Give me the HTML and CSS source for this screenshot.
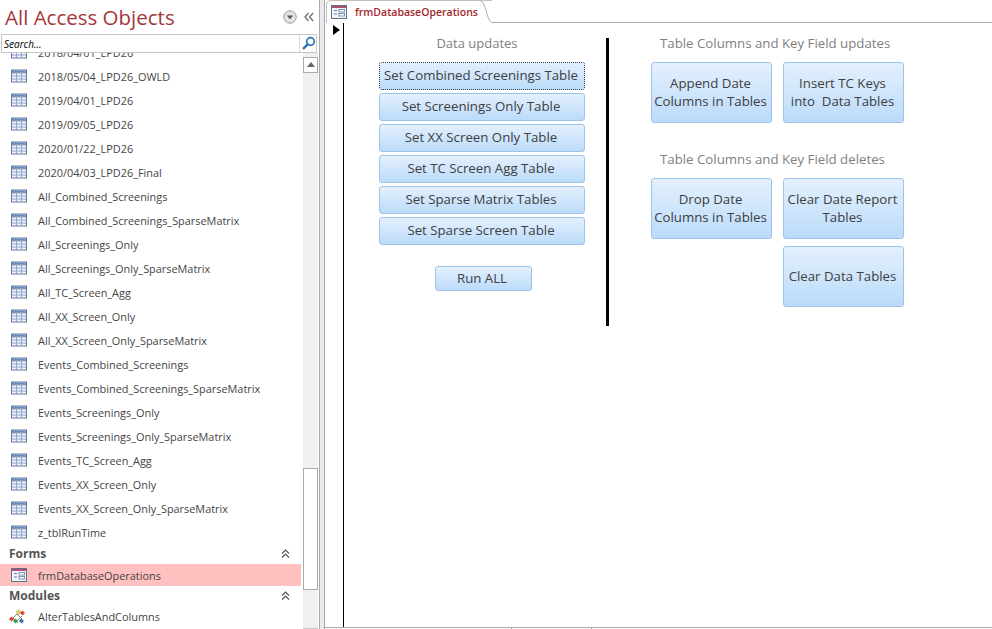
FILE: index.html

```html
<!DOCTYPE html>
<html lang="en">
<head>
    <meta charset="UTF-8">
    <title>frmDatabaseOperations</title>
    <link rel="stylesheet" href="styles.css">
</head>
<body>
    <svg class="defs" width="0" height="0">
        <symbol id="i-table" viewBox="0 0 16 13">
            <rect x="0.5" y="0.5" width="15" height="12" fill="#eef3fa" stroke="#5f7aa6"/>
            <rect x="1" y="1" width="14" height="2.5" fill="#6f8cba"/>
            <path d="M1 3.5h14M1 6.5h14M1 9.5h14M5.5 3v9M10.5 3v9" stroke="#8ea4c8" fill="none"/>
        </symbol>
        <symbol id="i-form" viewBox="0 0 16 14">
            <rect x="0.5" y="0.5" width="15" height="13" fill="#f2f5fa" stroke="#5f6f8c"/>
            <rect x="1" y="1" width="14" height="2" fill="#b0506f"/>
            <path d="M3 5.5h3M3 9h3" stroke="#5f7aa6" fill="none"/>
            <rect x="8" y="4.5" width="5.5" height="2.5" fill="#fff" stroke="#5f7aa6" stroke-width="0.8"/>
            <rect x="8" y="8.5" width="5.5" height="2.5" fill="#fff" stroke="#5f7aa6" stroke-width="0.8"/>
        </symbol>
    </svg>

    <div class="app">
        <aside class="nav">
            <div class="nav-head">
                <span class="nav-title">All Access Objects</span>
                <svg class="nav-menu" width="14" height="14" viewBox="0 0 14 14">
                    <circle cx="7" cy="7" r="6.2" fill="#e4e4e6" stroke="#9a9aa0"/>
                    <path d="M3.8 5.5h6.4L7 9.2z" fill="#555"/>
                </svg>
                <svg class="nav-collapse" width="10" height="10" viewBox="0 0 10 10">
                    <path d="M4.5 1L1 5l3.5 4M9 1L5.5 5 9 9" fill="none" stroke="#666" stroke-width="1.2"/>
                </svg>
            </div>
            <div class="search">
                <span class="search-text">Search...</span>
                <span class="search-btn">
                    <svg width="15" height="15" viewBox="0 0 15 15">
                        <circle cx="9.5" cy="5.5" r="3.8" fill="#fff" stroke="#2f74b5" stroke-width="1.7"/>
                        <path d="M6.8 8.2L2 13" stroke="#2f74b5" stroke-width="2.4" fill="none"/>
                    </svg>
                </span>
            </div>
            <div class="nav-body">
                <div class="nav-list">
                    <div class="nav-scroll">
                        <div class="row"><svg class="ico"><use href="#i-table"/></svg>2018/04/01_LPD26</div>
                        <div class="row"><svg class="ico"><use href="#i-table"/></svg>2018/05/04_LPD26_OWLD</div>
                        <div class="row"><svg class="ico"><use href="#i-table"/></svg>2019/04/01_LPD26</div>
                        <div class="row"><svg class="ico"><use href="#i-table"/></svg>2019/09/05_LPD26</div>
                        <div class="row"><svg class="ico"><use href="#i-table"/></svg>2020/01/22_LPD26</div>
                        <div class="row"><svg class="ico"><use href="#i-table"/></svg>2020/04/03_LPD26_Final</div>
                        <div class="row"><svg class="ico"><use href="#i-table"/></svg>All_Combined_Screenings</div>
                        <div class="row"><svg class="ico"><use href="#i-table"/></svg>All_Combined_Screenings_SparseMatrix</div>
                        <div class="row"><svg class="ico"><use href="#i-table"/></svg>All_Screenings_Only</div>
                        <div class="row"><svg class="ico"><use href="#i-table"/></svg>All_Screenings_Only_SparseMatrix</div>
                        <div class="row"><svg class="ico"><use href="#i-table"/></svg>All_TC_Screen_Agg</div>
                        <div class="row"><svg class="ico"><use href="#i-table"/></svg>All_XX_Screen_Only</div>
                        <div class="row"><svg class="ico"><use href="#i-table"/></svg>All_XX_Screen_Only_SparseMatrix</div>
                        <div class="row"><svg class="ico"><use href="#i-table"/></svg>Events_Combined_Screenings</div>
                        <div class="row"><svg class="ico"><use href="#i-table"/></svg>Events_Combined_Screenings_SparseMatrix</div>
                        <div class="row"><svg class="ico"><use href="#i-table"/></svg>Events_Screenings_Only</div>
                        <div class="row"><svg class="ico"><use href="#i-table"/></svg>Events_Screenings_Only_SparseMatrix</div>
                        <div class="row"><svg class="ico"><use href="#i-table"/></svg>Events_TC_Screen_Agg</div>
                        <div class="row"><svg class="ico"><use href="#i-table"/></svg>Events_XX_Screen_Only</div>
                        <div class="row"><svg class="ico"><use href="#i-table"/></svg>Events_XX_Screen_Only_SparseMatrix</div>
                        <div class="row"><svg class="ico"><use href="#i-table"/></svg>z_tblRunTime</div>

                        <div class="group">Forms<svg class="fold" width="9" height="9" viewBox="0 0 9 9"><path d="M1 4.500L4.500 1 8 4.500M1 8.500L4.500 5 8 8.500" fill="none" stroke="#555" stroke-width="1.2"/></svg></div>
                        <div class="row row-active"><svg class="ico"><use href="#i-form"/></svg>frmDatabaseOperations</div>

                        <div class="group group-modules">Modules<svg class="fold" width="9" height="9" viewBox="0 0 9 9"><path d="M1 4.500L4.500 1 8 4.500M1 8.500L4.500 5 8 8.500" fill="none" stroke="#555" stroke-width="1.2"/></svg></div>
                        <div class="row">
                            <svg class="ico ico-module" viewBox="0 0 16 15">
                                <path d="M2 11L10 3M6 14L13 7M4 9l5 5M8 5l5 5" stroke="#8a8a70" stroke-width="1" fill="none"/>
                                <path d="M7 3l2.500-2.500L12 3 9.500 5.500z" fill="#e8d36a" stroke="#a89a50" stroke-width="0.5"/>
                                <path d="M11 4l2.500-2.500L16 4 13.500 6.500z" fill="#d9482b"/>
                                <path d="M0 10l2.500-2.500L5 10 2.500 12.500z" fill="#d9482b"/>
                                <path d="M4 12l2.500-2.500L9 12 6.500 14.500z" fill="#3f9a4a"/>
                                <path d="M10 12l2.500-2.500L15 12 12.500 14.500z" fill="#2f6fb5"/>
                            </svg>AlterTablesAndColumns</div>
                    </div>
                </div>
                <div class="scrollbar">
                    <div class="scroll-up"></div>
                    <div class="scroll-thumb"></div>
                </div>
            </div>
        </aside>

        <div class="splitter"></div>

        <main class="doc">
            <div class="tabs">
                <div class="tab">
                    <svg class="tab-ico"><use href="#i-form"/></svg>
                    <span>frmDatabaseOperations</span>
                    <svg class="tab-end" width="13" height="23" viewBox="0 0 13 23">
                        <path d="M0 0.500C5 0.500 6 8 8 14C9.500 19 11 22 13 22.500V23H0z" fill="#fff"/>
                        <path d="M0 0.500C5 0.500 6 8 8 14C9.500 19 11 22 13 22.500" fill="none" stroke="#b0a89a"/>
                    </svg>
                </div>
                <div class="tabs-rest"></div>
            </div>
            <div class="form">
                <div class="selector"><span class="selector-arrow"></span></div>
                <div class="detail">
                    <section class="col-left">
                        <div class="label label-data">Data updates</div>
                        <div class="btn-stack">
                            <button class="btn btn-wide btn-focus">Set Combined Screenings Table</button>
                            <button class="btn btn-wide">Set Screenings Only Table</button>
                            <button class="btn btn-wide">Set XX Screen Only Table</button>
                            <button class="btn btn-wide">Set TC Screen Agg Table</button>
                            <button class="btn btn-wide">Set Sparse Matrix Tables</button>
                            <button class="btn btn-wide">Set Sparse Screen Table</button>
                        </div>
                        <button class="btn btn-run">Run ALL</button>
                    </section>
                    <div class="divider"></div>
                    <section class="col-right">
                        <div class="label">Table Columns and Key Field updates</div>
                        <div class="btn-grid">
                            <button class="btn btn-big">Append Date Columns in Tables</button>
                            <button class="btn btn-big">Insert TC Keys into&nbsp; Data Tables</button>
                        </div>
                        <div class="label label-second">Table Columns and Key Field deletes</div>
                        <div class="btn-grid">
                            <button class="btn btn-big">Drop Date Columns in Tables</button>
                            <button class="btn btn-big">Clear Date Report Tables</button>
                            <button class="btn btn-big btn-last">Clear Data Tables</button>
                        </div>
                    </section>
                </div>
            </div>
            <div class="doc-foot"><span class="tick"></span><span class="tick"></span></div>
        </main>
    </div>
</body>
</html>
```

FILE: styles.css

```css
* {
    box-sizing: border-box;
}
body {
    margin: 0;
    background: #fff;
    font-family: "Open Sans", "Noto Sans", sans-serif;
    overflow: hidden;
}
.defs {
    position: absolute;
}
.app {
    display: flex;
    width: 992px;
    height: 629px;
    overflow: hidden;
}

/* navigation pane */
.nav {
    width: 319px;
    flex: none;
    display: flex;
    flex-direction: column;
}
.nav-head {
    height: 34px;
    display: flex;
    align-items: center;
    padding: 0 0 0 5px;
}
.nav-title {
    flex: 1;
    font-size: 20.500px;
    color: #a4373a;
}
.nav-menu {
    margin-right: 7px;
    margin-bottom: 1px;
}
.nav-collapse {
    margin-right: 5px;
    margin-bottom: 1px;
}
.search {
    height: 19px;
    margin-left: 1px;
    margin-right: 2px;
    border: 1px solid #c6c6c6;
    display: flex;
    align-items: center;
    justify-content: space-between;
}
.search-text {
    font-size: 10px;
    font-style: italic;
    padding-left: 2px;
}
.search-btn {
    width: 17px;
    height: 17px;
    border-left: 1px solid #dcdcdc;
    display: flex;
    align-items: center;
    justify-content: center;
}
.nav-body {
    flex: 1;
    display: flex;
    min-height: 0;
}
.nav-list {
    width: 303px;
    flex: none;
    overflow: hidden;
}
.nav-scroll {
    margin-top: -13px;
    padding-right: 2px;
}
.row {
    height: 24px;
    display: flex;
    align-items: center;
    padding-left: 11px;
    font-size: 10.900px;
    color: #444;
}
.ico {
    width: 16px;
    height: 14px;
    margin-right: 11px;
    flex: none;
}
.ico-module {
    height: 15px;
    margin-left: -2px;
    margin-right: 13px;
}
.row-active {
    height: 22px;
    background: #ffc0c0;
}
.group {
    height: 20px;
    display: flex;
    align-items: center;
    justify-content: space-between;
    padding: 0 11px 1px 9px;
    font-size: 12px;
    font-weight: 700;
    color: #555;
}
.group-modules {
    height: 18px;
    padding-bottom: 0;
}
.scrollbar {
    width: 15px;
    flex: none;
    background: #f0f0f0;
    padding-top: 4px;
    border-bottom: 1px solid #c8c8c8;
    display: flex;
    flex-direction: column;
    justify-content: space-between;
    padding-bottom: 38px;
}
.scroll-up {
    height: 16px;
    background: #fff;
    border: 1px solid #ababab;
    position: relative;
}
.scroll-up::after {
    content: "";
    position: absolute;
    left: 3px;
    top: 4px;
    border: 4px solid transparent;
    border-top: 0;
    border-bottom: 5px solid #666;
}
.scroll-thumb {
    height: 122px;
    background: #fff;
    border: 1px solid #ababab;
}

.splitter {
    width: 6px;
    flex: none;
    background: #e9e9ee;
    border-left: 1px solid #a8a8b0;
    border-right: 1px solid #a8a8b0;
}

/* document area */
.doc {
    flex: 1;
    min-width: 0;
    display: flex;
    flex-direction: column;
}
.tabs {
    height: 23px;
    display: flex;
    flex: none;
}
.tab {
    display: flex;
    align-items: center;
    padding-left: 4px;
    border-left: 1px solid #c8c0b4;
    border-top: 1px solid #c8c0b4;
    border-top-left-radius: 5px;
    margin-left: 1px;
    height: 23px;
    font-size: 10.500px;
    font-weight: 600;
    color: #a4262c;
}
.tab-ico {
    width: 16px;
    height: 14px;
    margin-right: 8px;
}
.tab-end {
    margin-left: 1px;
    margin-top: -1px;
}
.tabs-rest {
    flex: 1;
    border-bottom: 1px solid #a8a8a8;
}
.form {
    flex: 1;
    display: flex;
    min-height: 0;
}
.selector {
    width: 19px;
    flex: none;
    border-right: 1px solid #000;
    padding: 2px 0 0 8px;
}
.selector-arrow {
    display: block;
    width: 0;
    height: 0;
    border-top: 5.500px solid transparent;
    border-bottom: 5.500px solid transparent;
    border-left: 7px solid #000;
}
.detail {
    flex: 1;
    display: flex;
    align-items: flex-start;
    padding: 15px 0 0 35px;
}
.label {
    font-size: 13.250px;
    line-height: 10px;
    color: #7f7f7f;
    height: 24px;
    padding-left: 9px;
    white-space: nowrap;
}
.label-data {
    font-size: 13px;
    padding-left: 0;
    margin-right: 10px;
}
.col-left {
    width: 206px;
    display: flex;
    flex-direction: column;
    align-items: center;
}
.btn-stack {
    display: flex;
    flex-direction: column;
    gap: 3px;
    width: 100%;
}
.btn {
    padding: 0 4px 2px 2px;
    border: 1px solid #9dc3e6;
    border-radius: 3px;
    background: linear-gradient(#e4f0fd, #bbdbfa);
    font-family: inherit;
    font-size: 13.250px;
    line-height: 18px;
    color: #404040;
}
.btn-wide {
    height: 28px;
    width: 100%;
}
/* dotted focus rectangle, drawn as four 1px strips over the gradient */
.btn-focus {
    border-color: transparent;
    background-origin: border-box;
    background-repeat: no-repeat;
    background-image:
        repeating-linear-gradient(90deg, #33415c 0 1px, transparent 1px 2px),
        repeating-linear-gradient(90deg, #33415c 0 1px, transparent 1px 2px),
        repeating-linear-gradient(0deg, #33415c 0 1px, transparent 1px 2px),
        repeating-linear-gradient(0deg, #33415c 0 1px, transparent 1px 2px),
        linear-gradient(#e4f0fd, #bbdbfa);
    background-size: 100% 1px, 100% 1px, 1px 100%, 1px 100%, 100% 100%;
    background-position: top, bottom, left, right, center;
}
.btn-run {
    width: 97px;
    height: 25px;
    margin-top: 21px;
    margin-left: 2px;
}
.divider {
    width: 3px;
    height: 288px;
    background: #000;
    margin-left: 21px;
    margin-right: 42px;
}
.col-right {
    width: 253px;
}
.btn-grid {
    display: grid;
    grid-template-columns: 121px 121px;
    gap: 7px 11px;
}
.btn-big {
    height: 61px;
}
.btn-last {
    grid-column: 2;
}
.label-second {
    margin-top: 31px;
}
.doc-foot {
    height: 2px;
    flex: none;
    border-top: 1px solid #a8a8b0;
    display: flex;
    padding-left: 186px;
    gap: 79px;
}
.tick {
    width: 1px;
    height: 1px;
    background: #a8a8b0;
}
```
